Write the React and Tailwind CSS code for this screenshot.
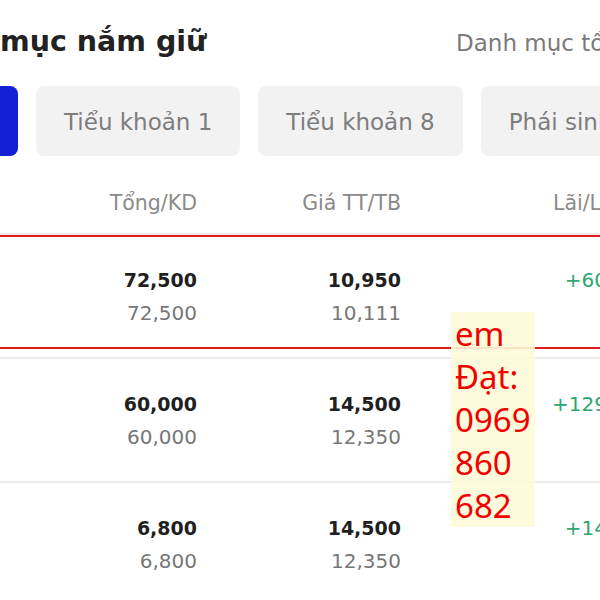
import React from 'react';

const rows = [
    { total: "72,500", avail: "72,500", price: "10,950", avg: "10,111", pl: "+60,500,000" },
    { total: "60,000", avail: "60,000", price: "14,500", avg: "12,350", pl: "+129,000,000" },
    { total: "6,800", avail: "6,800", price: "14,500", avg: "12,350", pl: "+14,620,000" },
];

const tabs = ["Tiểu khoản 1", "Tiểu khoản 8", "Phái sinh"];

const App = () => {
    return (
        <div className="relative w-[600px] h-[600px] overflow-hidden bg-white font-['DejaVu_Sans',sans-serif]">

            {/* Header */}
            <div className="relative h-[62px]">
                <h1 className="absolute left-0 top-[24px] text-[28.5px] font-bold text-[#222] leading-[36px] whitespace-nowrap">mục nắm giữ</h1>
                <span className="absolute left-[456px] top-[28px] text-[23px] text-[#7a7a7a] leading-[30px] whitespace-nowrap">Danh mục tổng</span>
            </div>

            {/* Tabs */}
            <div className="flex gap-[18px] mt-[24px] h-[70px] -ml-[60px] whitespace-nowrap">
                <div className="w-[78px] shrink-0 rounded-[8px] bg-[#1320d4]"></div>
                {tabs.map((t, i) => (
                    <div key={i} className="shrink-0 px-[28px] pt-[2px] rounded-[8px] bg-[#f2f2f2] flex items-center text-[23px] text-[#7d7d7d]">
                        {t}
                    </div>
                ))}
            </div>

            {/* Column headers */}
            <div className="flex h-[77px] pt-[18px] items-center text-[20.5px] text-[#8a8a8a] whitespace-nowrap">
                <div className="w-[197px] shrink-0 text-right">Tổng/KD</div>
                <div className="w-[204px] shrink-0 text-right">Giá TT/TB</div>
                <div className="w-[152px] shrink-0"></div>
                <div className="shrink-0">Lãi/Lỗ</div>
            </div>

            {/* Rows */}
            {rows.map((r, i) => (
                <div key={i} className="flex h-[124px] border-t-2 border-[#ececec] pt-[31px] whitespace-nowrap">
                    <div className="w-[197px] shrink-0 text-right">
                        <div className="text-[19px] font-bold text-[#1f1f1f] leading-[28px]">{r.total}</div>
                        <div className="text-[20px] text-[#777] leading-[28px] mt-[5px]">{r.avail}</div>
                    </div>
                    <div className="w-[204px] shrink-0 text-right">
                        <div className="text-[19px] font-bold text-[#1f1f1f] leading-[28px]">{r.price}</div>
                        <div className="text-[20px] text-[#777] leading-[28px] mt-[5px]">{r.avg}</div>
                    </div>
                    <div className="w-[295px] shrink-0 text-right">
                        <div className="text-[20px] text-[#2ea66e] leading-[28px]">{r.pl}</div>
                    </div>
                </div>
            ))}

            {/* Red annotation box */}
            <div className="absolute left-0 right-0 top-[235px] h-[2px] bg-[#e31b1b]"></div>
            <div className="absolute left-0 right-0 top-[347px] h-[2px] bg-[#e31b1b]"></div>

            {/* Sticky note */}
            <div className="absolute left-[451px] top-[312px] w-[84px] h-[215px] bg-[#fdfbd8]/90 pl-[4px]">
                <p className="font-['Noto_Sans',sans-serif] text-[33px] leading-[43px] text-[#f00000] whitespace-pre-line">
                    {"em\nĐạt:\n0969\n860\n682"}
                </p>
            </div>
        </div>
    );
};

export default App;
